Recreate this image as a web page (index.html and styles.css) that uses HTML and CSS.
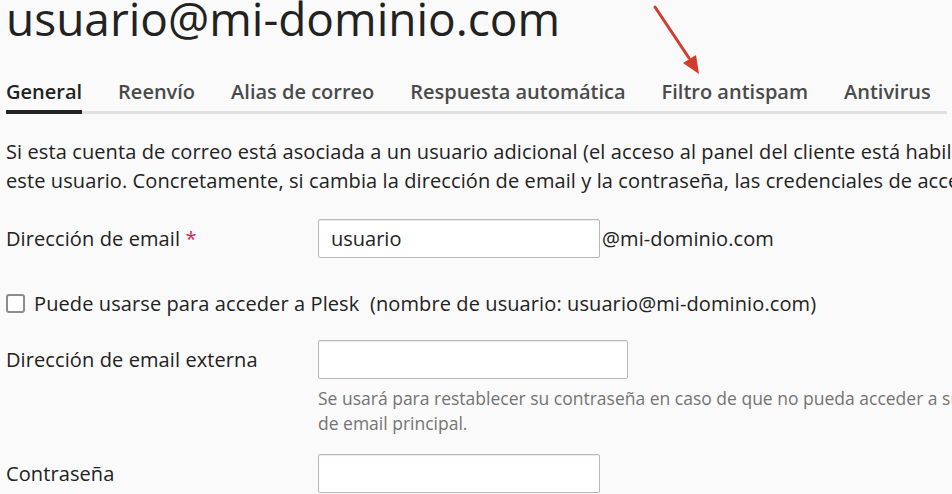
FILE: index.html
```html
<!DOCTYPE html>
<html lang="es">
  <head>
    <meta charset="UTF-8" />
    <meta name="viewport" content="width=device-width, initial-scale=1.0" />
    <title>usuario@mi-dominio.com</title>
    <link rel="stylesheet" href="styles.css">
  </head>
  <body>
    <div class="page">
      <h1 class="page-title">usuario@mi-dominio.com</h1>

      <div class="tabs">
        <a class="tab active" href="#">General</a>
        <a class="tab" href="#">Reenvío</a>
        <a class="tab" href="#">Alias de correo</a>
        <a class="tab" href="#">Respuesta automática</a>
        <a class="tab" href="#">Filtro antispam</a>
        <a class="tab" href="#">Antivirus</a>
      </div>

      <p class="intro">
        Si esta cuenta de correo está asociada a un usuario adicional (el acceso al panel del cliente está habilitado), los cambios que realice aquí también afectarán a<br>
        este usuario. Concretamente, si cambia la dirección de email y la contraseña, las credenciales de acceso del usuario adicional también cambiarán.
      </p>

      <form class="form">
        <div class="form-row">
          <label class="form-label" for="email">Dirección de email <span class="required">*</span></label>
          <div class="form-field">
            <input class="input" id="email" type="text" value="usuario">
            <span class="domain">@mi-dominio.com</span>
          </div>
        </div>

        <div class="check-row">
          <input class="checkbox" id="plesk" type="checkbox">
          <label for="plesk">Puede usarse para acceder a Plesk&nbsp; (nombre de usuario: usuario@mi-dominio.com)</label>
        </div>

        <div class="form-row">
          <label class="form-label" for="external">Dirección de email externa</label>
          <div class="form-field">
            <input class="input input-wide" id="external" type="text">
          </div>
        </div>
        <div class="hint">Se usará para restablecer su contraseña en caso de que no pueda acceder a su dirección de email principal.</div>

        <div class="form-row">
          <label class="form-label" for="password">Contraseña</label>
          <div class="form-field">
            <input class="input" id="password" type="password">
          </div>
        </div>
      </form>
    </div>

    <svg class="arrow" width="60" height="80" viewBox="0 0 60 80">
      <line x1="15" y1="7" x2="49" y2="58" stroke="#d33b2c" stroke-width="3" stroke-linecap="round" />
      <polygon points="59,74 43,63 56,55" fill="#d33b2c" />
    </svg>
  </body>
</html>
```

FILE: styles.css
```css
* {
  margin: 0;
  padding: 0;
  box-sizing: border-box;
}

body {
  font-family: 'Open Sans', 'Liberation Sans', sans-serif;
  font-size: 20px;
  line-height: 29px;
  letter-spacing: 0.1px;
  color: #222;
  background: #fafafa;
  overflow: hidden;
}

.page {
  width: 1400px;
  padding-left: 6px;
}

.page-title {
  font-size: 46px;
  font-weight: 400;
  line-height: 55px;
  letter-spacing: 0;
  margin: -9px 0 31px;
  color: #222;
}

.tabs {
  display: flex;
  width: 941px;
  border-bottom: 3px solid #e1e1e1;
  letter-spacing: 0;
}

.tab {
  flex-shrink: 0;
  white-space: nowrap;
  font-weight: 600;
  color: #4a4a4a;
  text-decoration: none;
  margin-right: 36px;
  padding-bottom: 4px;
  border-bottom: 4px solid transparent;
  margin-bottom: -3px;
}

.tab.active {
  color: #222;
  border-bottom-color: #222;
}

.intro {
  margin-top: 23px;
  margin-bottom: 24px;
  white-space: nowrap;
}

.form-row {
  display: flex;
  align-items: flex-start;
}

.form-label {
  width: 312px;
  flex-shrink: 0;
  padding-top: 5px;
}

.required {
  color: #c2305a;
}

.form-field {
  display: flex;
  align-items: center;
}

.input {
  width: 282px;
  height: 39px;
  padding: 0 12px;
  font-family: inherit;
  font-size: 20px;
  color: #222;
  background: #fff;
  border: 1px solid #b8b8b8;
  border-radius: 2px;
  box-shadow: inset 0 1px 1px rgba(0, 0, 0, 0.08);
  outline: none;
}

.input-wide {
  width: 310px;
}

.domain {
  margin-left: 2px;
}

.check-row {
  display: flex;
  align-items: center;
  margin: 31px 0 22px;
}

.checkbox {
  appearance: none;
  width: 19px;
  height: 19px;
  border: 2px solid #8c8c8c;
  border-radius: 3px;
  background: #fff;
  margin-right: 9px;
}

.hint {
  margin: 7px 0 19px 312px;
  width: 728px;
  font-size: 17.5px;
  line-height: 24.5px;
  letter-spacing: 0;
  color: #747474;
}

.arrow {
  position: absolute;
  left: 640px;
  top: 0;
}
```
